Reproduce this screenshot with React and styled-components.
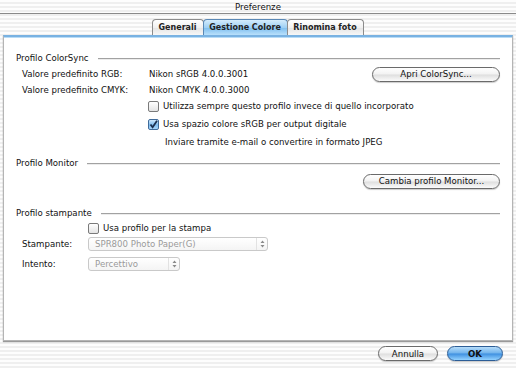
import styled, { createGlobalStyle } from "styled-components";

const GlobalStyle = createGlobalStyle`
  html, body { margin: 0; padding: 0; }
  body {
    font-family: "DejaVu Sans", "Liberation Sans", sans-serif;
    font-size: 8.6px;
    color: #111;
  }
`;

const Window = styled.div`
  width: 516px;
  height: 368px;
  display: flex;
  flex-direction: column;
  background: repeating-linear-gradient(#fdfdfd 0 2px, #efefef 2px 4px);
  overflow: hidden;
`;

const TitleBar = styled.div`
  height: 13px;
  border-bottom: 1px solid #8a8a8a;
  display: flex;
  align-items: center;
  justify-content: center;
  font-size: 8.6px;
`;

const TabStrip = styled.div`
  display: flex;
  justify-content: center;
  margin-top: 5px;
  height: 16px;
`;

const Tab = styled.div`
  width: ${p => p.w}px;
  height: 16px;
  box-sizing: border-box;
  display: flex;
  align-items: center;
  justify-content: center;
  border: 1px solid #8c8c8c;
  border-bottom: none;
  border-radius: 4px 4px 0 0;
  margin-left: -1px;
  font-weight: bold;
  font-size: 8px;
  color: #222;
  background: ${p => p.active
    ? "linear-gradient(#d4ecfc, #9fd0f4 50%, #7cbdee 51%, #b9e0fb)"
    : "linear-gradient(#ffffff, #f1f1f1 50%, #e4e4e4 51%, #f7f7f7)"};
  border-color: ${p => p.active ? "#5a88b5" : "#8c8c8c"};
`;

const Panel = styled.div`
  margin: 0 3px;
  height: 306px;
  box-sizing: border-box;
  background: #fff;
  border: 1px solid #b4b4b4;
  border-top: 2px solid #79b2e2;
  box-shadow: inset 0 1px 0 #b9dcf6, 0 1px 1px #999;
  padding: 13px 12px 0 12px;
`;

const SectionHead = styled.div`
  display: flex;
  align-items: center;
  height: 16px;
  margin-top: ${p => p.mt || 0}px;
`;

const Rule = styled.div`
  flex: 1;
  height: 1px;
  margin-left: 9px;
  background: #a2a2a2;
  box-shadow: 0 1px 0 #ececec;
`;

const Row = styled.div`
  display: flex;
  align-items: center;
  height: ${p => p.h || 16}px;
  margin-top: ${p => p.mt || 0}px;
  padding-left: ${p => p.indent || 0}px;
`;

const Label = styled.div`
  width: ${p => p.w}px;
  padding-left: 6px;
  box-sizing: border-box;
`;

const AquaButton = styled.div`
  margin-left: ${p => p.push ? "auto" : "0"};
  width: ${p => p.w}px;
  height: 15px;
  box-sizing: border-box;
  border: 1px solid ${p => p.primary ? "#2c5d96" : "#6a6a6a"};
  border-radius: 8px;
  display: flex;
  align-items: center;
  justify-content: center;
  font-size: 8.6px;
  font-weight: ${p => p.primary ? "bold" : "normal"};
  background: ${p => p.primary
    ? "linear-gradient(#b5dcfa, #6fb2ec 48%, #3d8fe0 52%, #93d2ff)"
    : "linear-gradient(#ffffff, #f2f2f2 48%, #dedede 52%, #fbfbfb)"};
  box-shadow: 0 1px 1px rgba(0,0,0,0.2);
`;

const Box = styled.div`
  width: 11px;
  height: 11px;
  box-sizing: border-box;
  border: 1px solid ${p => p.checked ? "#3f6b9a" : "#7a7a7a"};
  border-radius: 2px;
  margin-right: 4px;
  display: flex;
  align-items: center;
  justify-content: center;
  background: ${p => p.checked
    ? "linear-gradient(#cde6fb, #7fbdf0 55%, #a9d5fa)"
    : "linear-gradient(#ffffff, #e4e4e4)"};
`;

const Popup = styled.div`
  width: ${p => p.w}px;
  height: 14px;
  box-sizing: border-box;
  border: 1px solid #c9c9c9;
  border-radius: 3px;
  display: flex;
  align-items: center;
  padding-left: 6px;
  color: #9a9a9a;
  background: linear-gradient(#ffffff, #f4f4f4);
`;

const Arrows = styled.div`
  margin-left: auto;
  width: 10px;
  height: 12px;
  border-left: 1px solid #e2e2e2;
  display: flex;
  align-items: center;
  justify-content: center;
`;

const Footer = styled.div`
  display: flex;
  justify-content: flex-end;
  gap: 9px;
  padding-right: 13px;
  margin-top: 5px;
`;

const Check = ({ checked, children }) => (
  <>
    <Box checked={checked}>
      {checked && (
        <svg width="9" height="9" viewBox="0 0 9 9">
          <path d="M1.5 4.5 L3.6 7.2 L8 0.8" fill="none" stroke="#1b2f4f" strokeWidth="1.8" />
        </svg>
      )}
    </Box>
    <span>{children}</span>
  </>
);

const UpDown = () => (
  <Arrows>
    <svg width="5" height="8" viewBox="0 0 5 8">
      <path d="M2.5 0.5 L4.5 3 L0.5 3 Z M2.5 7.5 L4.5 5 L0.5 5 Z" fill="#8a8a8a" />
    </svg>
  </Arrows>
);

export default function App() {
  return (
    <Window>
      <GlobalStyle />
      <TitleBar>Preferenze</TitleBar>
      <TabStrip>
        <Tab w={52}>Generali</Tab>
        <Tab w={85} active>Gestione Colore</Tab>
        <Tab w={77}>Rinomina foto</Tab>
      </TabStrip>
      <Panel>
        <SectionHead>Profilo ColorSync<Rule /></SectionHead>
        <Row>
          <Label w={133}>Valore predefinito RGB:</Label>
          <span>Nikon sRGB 4.0.0.3001</span>
          <AquaButton push w={128}>Apri ColorSync...</AquaButton>
        </Row>
        <Row>
          <Label w={133}>Valore predefinito CMYK:</Label>
          <span>Nikon CMYK 4.0.0.3000</span>
        </Row>
        <Row indent={132}>
          <Check>Utilizza sempre questo profilo invece di quello incorporato</Check>
        </Row>
        <Row h={18} mt={1} indent={132}>
          <Check checked>Usa spazio colore sRGB per output digitale</Check>
        </Row>
        <Row h={18} indent={149}>Inviare tramite e-mail o convertire in formato JPEG</Row>

        <SectionHead mt={4}>Profilo Monitor<Rule /></SectionHead>
        <Row h={18} mt={1}>
          <AquaButton push w={137}>Cambia profilo Monitor...</AquaButton>
        </Row>

        <SectionHead mt={15}>Profilo stampante<Rule /></SectionHead>
        <Row h={14}>
          <Label w={72} />
          <Check>Usa profilo per la stampa</Check>
        </Row>
        <Row h={14} mt={2}>
          <Label w={72}>Stampante:</Label>
          <Popup w={180}>SPR800 Photo Paper(G)<UpDown /></Popup>
        </Row>
        <Row h={14} mt={6}>
          <Label w={72}>Intento:</Label>
          <Popup w={92}>Percettivo<UpDown /></Popup>
        </Row>
      </Panel>
      <Footer>
        <AquaButton w={60}>Annulla</AquaButton>
        <AquaButton w={56} primary>OK</AquaButton>
      </Footer>
    </Window>
  );
}
